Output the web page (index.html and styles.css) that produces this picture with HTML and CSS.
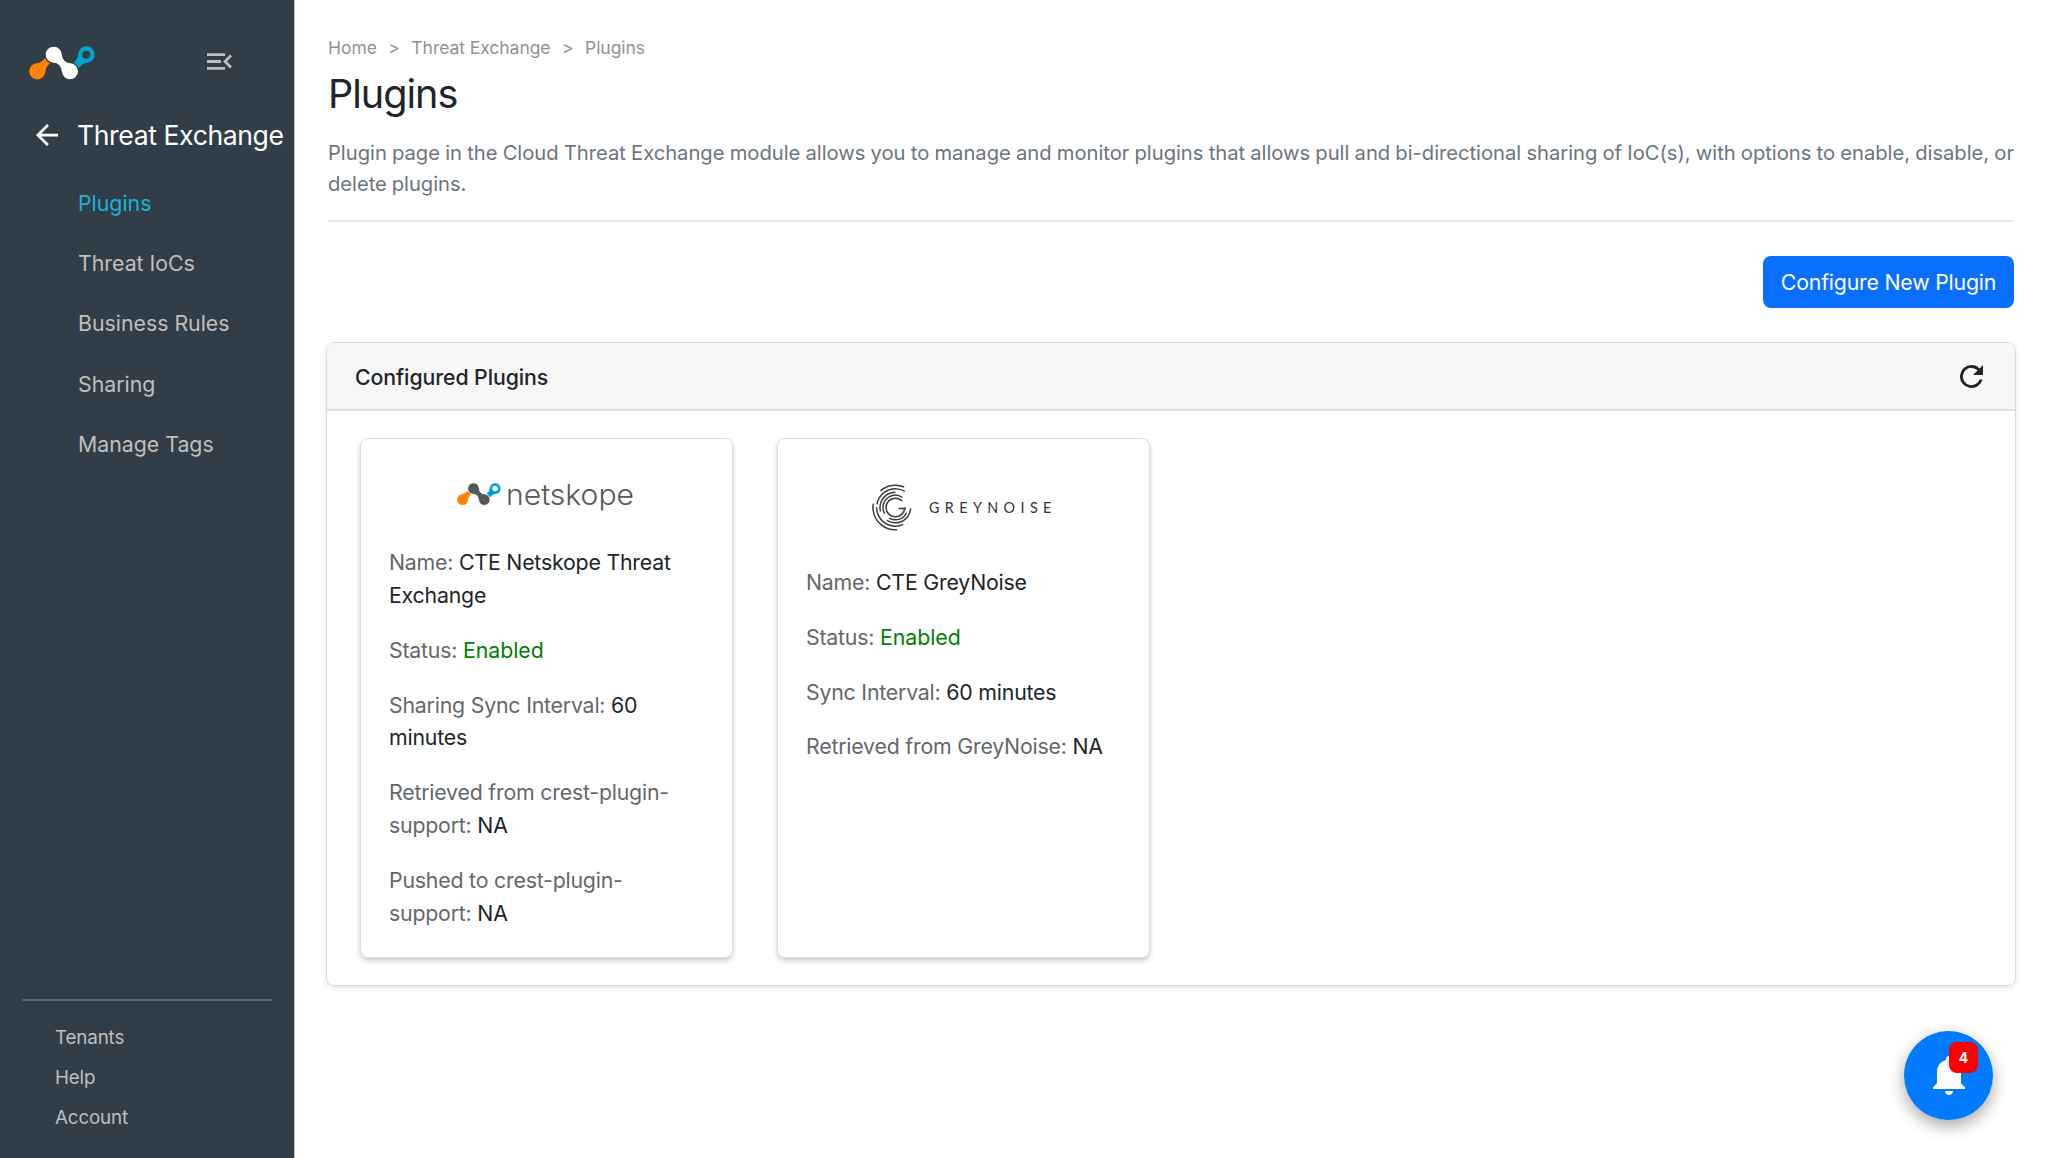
FILE: index.html
```html
<!DOCTYPE html>
<html lang="en">
<head>
    <meta charset="utf-8">
    <title>Plugins</title>
    <link rel="stylesheet" href="styles.css">
</head>
<body>
    <div class="layout">
        <aside class="sidebar">
            <div class="sidebar-top">
                <svg class="logo-mark" viewBox="0 0 198 100">
                    <path fill="#ff8300" d="M49 76.7Q49.5 62.5 64.1 50.2L48.3 35Q36.5 50.1 22.4 51.1Z"/>
                    <circle fill="#ff8300" cx="25" cy="75" r="24.5"/>
                    <path fill="#00a3d0" d="M174.6 48.9Q160.5 49.9 148.7 65L132.9 49.8Q147.5 37.5 148 23.3Z"/>
                    <circle fill="#313e47" stroke="#00a3d0" stroke-width="13" cx="172" cy="25" r="18.5"/>
                    <g fill="#fff">
                        <circle class="gap" cx="74" cy="25" r="26"/>
                        <circle class="gap" cx="123" cy="75" r="26"/>
                        <path d="M71.2 47.8Q97.3 51.2 99 77.4L125.8 52.2Q99.7 48.8 98 22.6Z"/>
                    </g>
                </svg>
                <svg class="menu-icon" viewBox="3 6 18 12">
                    <path d="M3 18h13v-2H3v2zM3 13h10v-2H3v2zm0-7v2h13V6H3zm18 9.6L17.4 12 21 8.4 19.6 7l-5 5 5 5z"/>
                </svg>
            </div>
            <div class="module">
                <svg class="back-icon" viewBox="4 4 16 16">
                    <path d="M20 11H7.8l5.6-5.6L12 4l-8 8 8 8 1.4-1.4L7.8 13H20z"/>
                </svg>
                <span>Threat Exchange</span>
            </div>
            <nav class="menu">
                <a class="active">Plugins</a>
                <a>Threat IoCs</a>
                <a>Business Rules</a>
                <a>Sharing</a>
                <a>Manage Tags</a>
            </nav>
            <div class="sidebar-footer">
                <a>Tenants</a>
                <a>Help</a>
                <a>Account</a>
            </div>
        </aside>
        <main class="content">
            <div class="breadcrumb">
                <span>Home</span><i>&gt;</i><span>Threat Exchange</span><i>&gt;</i><span>Plugins</span>
            </div>
            <h1>Plugins</h1>
            <p class="description">Plugin page in the Cloud Threat Exchange module allows you to manage and monitor plugins that allows pull and bi-directional sharing of IoC(s), with options to enable, disable, or delete plugins.</p>
            <div class="actions">
                <button class="btn">Configure New Plugin</button>
            </div>
            <section class="panel">
                <header class="panel-header">
                    <span>Configured Plugins</span>
                    <svg class="refresh-icon" viewBox="4 4 16 16">
                        <path d="M17.65 6.35A7.96 7.96 0 0 0 12 4a8 8 0 1 0 7.73 10h-2.08A6 6 0 1 1 12 6c1.66 0 3.14.69 4.22 1.78L13 11h7V4z"/>
                    </svg>
                </header>
                <div class="panel-body">
                    <div class="card">
                        <div class="card-logo">
                            <svg class="netskope" viewBox="0 0 177 34">
                                <g transform="scale(.222)">
                                    <path fill="#ff8300" d="M49 76.7Q49.5 62.5 64.1 50.2L48.3 35Q36.5 50.1 22.4 51.1Z"/>
                                    <circle fill="#ff8300" cx="25" cy="75" r="24.5"/>
                                    <path fill="#00a3d0" d="M174.6 48.9Q160.5 49.9 148.7 65L132.9 49.8Q147.5 37.5 148 23.3Z"/>
                                    <circle fill="#fff" stroke="#00a3d0" stroke-width="12" cx="172" cy="25" r="18.5"/>
                                    <g fill="#54565a">
                                        <circle class="gap" cx="74" cy="25" r="26"/>
                                        <circle class="gap" cx="123" cy="75" r="26"/>
                                        <path d="M71.2 47.8Q97.3 51.2 99 77.4L125.8 52.2Q99.7 48.8 98 22.6Z"/>
                                    </g>
                                </g>
                                <text x="49" y="21.500" textLength="128" lengthAdjust="spacingAndGlyphs">netskope</text>
                            </svg>
                        </div>
                        <p>Name: <b>CTE Netskope Threat Exchange</b></p>
                        <p>Status: <b class="enabled">Enabled</b></p>
                        <p>Sharing Sync Interval: <b>60 minutes</b></p>
                        <p>Retrieved from crest-plugin-support: <b>NA</b></p>
                        <p>Pushed to crest-plugin-support: <b>NA</b></p>
                    </div>
                    <div class="card">
                        <div class="card-logo tall">
                            <svg class="greynoise" viewBox="0 0 540 140">
                                <g class="rings">
                                    <circle cx="70" cy="70" r="28" pathLength="360" stroke-dasharray="315 360"/>
                                    <path d="M80 73h22"/>
                                    <circle cx="70" cy="70" r="37" pathLength="360" stroke-dasharray="155 360" transform="rotate(150 70 70)"/>
                                    <circle cx="70" cy="70" r="37" pathLength="360" stroke-dasharray="95 360" transform="rotate(25 70 70)"/>
                                    <circle cx="70" cy="70" r="46" pathLength="360" stroke-dasharray="120 360" transform="rotate(3 70 70)"/>
                                    <circle cx="70" cy="70" r="46" pathLength="360" stroke-dasharray="105 360" transform="rotate(165 70 70)"/>
                                    <circle cx="70" cy="70" r="56" pathLength="360" stroke-dasharray="110 360" transform="rotate(190 70 70)"/>
                                    <circle cx="70" cy="70" r="56" pathLength="360" stroke-dasharray="115 360" transform="rotate(65 70 70)"/>
                                    <circle cx="70" cy="70" r="67" pathLength="360" stroke-dasharray="105 360" transform="rotate(85 70 70)"/>
                                    <circle cx="70" cy="70" r="67" pathLength="360" stroke-dasharray="65 360" transform="rotate(228 70 70)"/>
                                </g>
                                <text x="171" y="86" textLength="367">GREYNOISE</text>
                            </svg>
                        </div>
                        <p>Name: <b>CTE GreyNoise</b></p>
                        <p>Status: <b class="enabled">Enabled</b></p>
                        <p>Sync Interval: <b>60 minutes</b></p>
                        <p>Retrieved from GreyNoise: <b>NA</b></p>
                    </div>
                </div>
            </section>
        </main>
    </div>
    <div class="notify">
        <svg class="bell-icon" viewBox="0 0 32 40">
            <path d="M16 0c-2 0-3 1.400-3 3.200v.8C7.500 5.500 4 10 4 16v11L0 31.500V33h32v-1.500L28 27V16c0-6-3.500-10.500-9-12v-.8C19 1.400 18 0 16 0zM12 35c0 2.200 1.800 4 4 4s4-1.800 4-4z"/>
        </svg>
        <span class="badge">4</span>
    </div>
</body>
</html>
```
FILE: styles.css
```css
* {
    box-sizing: border-box;
}
body {
    margin: 0;
    font-family: Inter, "Liberation Sans", sans-serif;
    font-size: 21.3px;
    color: #212529;
    background-color: #fff;
}
.layout {
    display: flex;
    height: 1158px;
}

/* sidebar */
.sidebar {
    display: flex;
    flex-direction: column;
    width: 295px;
    flex-shrink: 0;
    background-color: #313e47;
    border-right: 1px solid #c5cad0;
    color: #bfbfbf;
}
.sidebar-top {
    display: flex;
    align-items: flex-start;
    justify-content: space-between;
    height: 115px;
    padding: 46px 62px 0 29px;
}
.logo-mark {
    width: 66px;
    height: 34px;
}
.gap {
    stroke: #313e47;
    stroke-width: 4;
}
.menu-icon {
    width: 25px;
    height: 17px;
    margin-top: 7px;
    fill: #bfbfbf;
}
.module {
    display: flex;
    align-items: center;
    gap: 19px;
    height: 40px;
    padding-left: 36px;
    font-size: 26.6px;
    letter-spacing: -0.4px;
    white-space: nowrap;
    color: #fff;
}
.back-icon {
    width: 22px;
    height: 22px;
    fill: #fff;
}
.menu {
    display: flex;
    flex-direction: column;
    padding: 18px 0 0 78px;
}
.menu a {
    line-height: 60.2px;
}
.menu .active {
    color: #1ab3dc;
}
.sidebar-footer {
    display: flex;
    flex-direction: column;
    height: 159px;
    margin: auto 22px 0;
    padding: 17px 0 0 33px;
    border-top: 2px solid #59646b;
    font-size: 18.8px;
    letter-spacing: -0.15px;
    line-height: 39.8px;
}

/* page */
.content {
    flex: 1;
    padding: 32px 32px 0 31px;
}
.breadcrumb {
    display: flex;
    padding-left: 2px;
    font-size: 17.5px;
    letter-spacing: -0.05px;
    line-height: 31px;
    color: #929292;
}
.breadcrumb i {
    width: 34.5px;
    text-align: center;
    font-style: normal;
}
h1 {
    margin: 6px 0 0 2px;
    font-size: 39.6px;
    letter-spacing: -1px;
    line-height: 50px;
    font-weight: 400;
}
.description {
    margin: 18px 2px 0;
    padding-bottom: 21px;
    border-bottom: 2px solid #e8e8e8;
    font-size: 20.2px;
    letter-spacing: -0.02px;
    word-spacing: -0.8px;
    line-height: 31px;
    text-align: justify;
    color: #6c757d;
}
.actions {
    display: flex;
    justify-content: flex-end;
    margin: 34px 2px;
}
.btn {
    width: 251px;
    height: 52px;
    border: 0;
    border-radius: 8px;
    background-color: #0a6fff;
    color: #fff;
    font-family: inherit;
    font-size: 21.3px;
    letter-spacing: -0.2px;
    white-space: nowrap;
}
.panel {
    border: 1px solid #dcdcdc;
    border-radius: 8px;
    box-shadow: 0 2px 5px rgba(0, 0, 0, 0.1);
}
.panel-header {
    display: flex;
    align-items: center;
    justify-content: space-between;
    height: 68px;
    padding: 1px 32px 0 28px;
    background-color: #f7f7f7;
    border-bottom: 2px solid #dfdfdf;
    border-radius: 7px 7px 0 0;
    font-weight: 500;
    letter-spacing: -0.08px;
}
.refresh-icon {
    width: 23px;
    height: 23px;
    fill: #212529;
}
.panel-body {
    display: flex;
    gap: 44px;
    padding: 27px 33px 27px;
}
.card {
    width: 373px;
    height: 520px;
    padding: 28px 27px 28px 28px;
    border: 1px solid #dcdcdc;
    border-radius: 8px;
    box-shadow: 0 3px 5px rgba(0, 0, 0, 0.2);
    color: #65676a;
    letter-spacing: -0.2px;
}
.card p {
    margin: 0 0 21.9px;
    line-height: 32.9px;
}
.card b {
    font-weight: 400;
    color: #212529;
}
.card .enabled {
    color: #008000;
    letter-spacing: -0.05px;
}
.card-logo {
    display: flex;
    justify-content: center;
    height: 79px;
    padding: 16px 4px 0 0;
    letter-spacing: 0;
}
.card-logo.tall {
    height: 99px;
    padding-top: 17px;
}
.card .gap {
    stroke: #fff;
}
.netskope {
    width: 177px;
    height: 34px;
    overflow: visible;
}
.netskope text {
    font-size: 29px;
    font-weight: 300;
    fill: #58595b;
}
.greynoise {
    width: 180px;
    height: 47px;
    overflow: visible;
}
.greynoise text {
    font-family: Lato, sans-serif;
    font-size: 43px;
    fill: #333;
}
.rings {
    fill: none;
    stroke: #3c3c3c;
    stroke-width: 4.5;
}

/* notification button */
.notify {
    position: fixed;
    right: 55px;
    bottom: 38px;
    display: flex;
    align-items: center;
    justify-content: center;
    width: 89px;
    height: 89px;
    border-radius: 50%;
    background-color: #007bff;
    box-shadow: 0 6px 16px rgba(0, 0, 0, 0.35);
}
.bell-icon {
    width: 32px;
    height: 40px;
    fill: #fff;
}
.badge {
    position: absolute;
    top: 11px;
    left: 45px;
    width: 29px;
    height: 31px;
    border-radius: 8px;
    background-color: #f00;
    color: #fff;
    font-size: 14px;
    font-weight: 700;
    line-height: 31px;
    text-align: center;
}
```
